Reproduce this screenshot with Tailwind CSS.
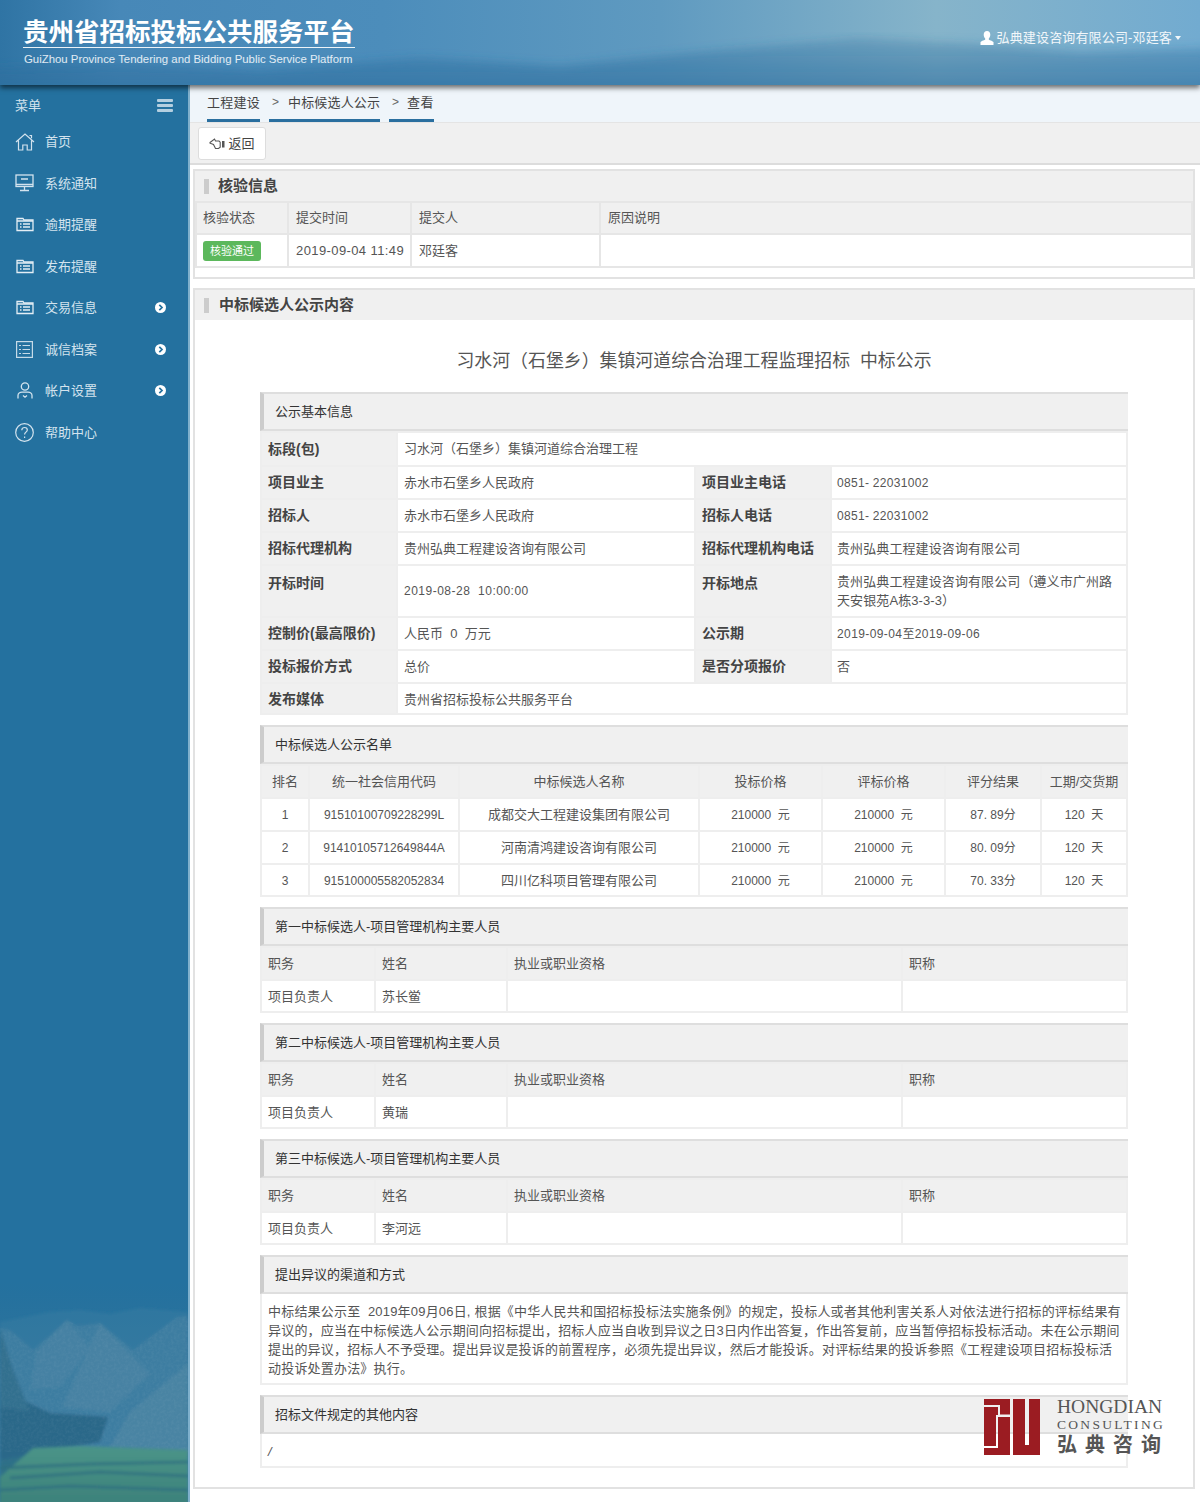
<!DOCTYPE html>
<html lang="zh">
<head>
  <meta charset="UTF-8">
  <title>贵州省招标投标公共服务平台</title>
  <script src="https://cdn.jsdelivr.net/npm/@tailwindcss/browser@4"></script>
</head>
<body class="w-[1200px] h-[1502px] overflow-hidden relative bg-white text-[13px] text-[#555] font-['Liberation_Sans','Noto_Sans_CJK_SC',sans-serif]">

  <!-- Header -->
  <header class="relative z-10 h-[85px] flex justify-between overflow-hidden shadow-[0_3px_5px_rgba(0,0,0,0.55)] bg-[linear-gradient(90deg,#2f74a4_0%,#4788b8_10%,#4c8dbb_32%,#5f9ac0_55%,#86b4ca_78%,#72abd0_100%)]">
    <svg class="absolute inset-0" width="1200" height="85" viewBox="0 0 1200 85">
      <defs>
        <linearGradient id="hfade" x1="0" y1="0" x2="0" y2="1">
          <stop offset="0" stop-color="#2a6c9c" stop-opacity="0.25"/>
          <stop offset="1" stop-color="#2f6f9e" stop-opacity="0.7"/>
        </linearGradient>
        <filter id="hblur"><feGaussianBlur stdDeviation="5"/></filter>
      </defs>
      <g filter="url(#hblur)">
        <path d="M-10 68 L120 62 L260 70 L420 58 L560 66 L720 50 L860 38 L980 44 L1080 52 L1210 48 V95 H-10 Z" fill="url(#hfade)"/>
      </g>
    </svg>
    <div class="relative pl-[23px] pt-[17px] w-[356px]">
      <div class="text-[25.5px] leading-[30px] font-bold text-white whitespace-nowrap border-b border-white/90 w-[332px]">贵州省招标投标公共服务平台</div>
      <div class="mt-[3px] pl-px text-[11.4px] leading-[17px] text-white/85 whitespace-nowrap w-[332px]">GuiZhou Province Tendering and Bidding Public Service Platform</div>
    </div>
    <div class="relative flex items-center gap-[3px] pr-[19px] pb-[9px] text-white/90 whitespace-nowrap">
      <svg width="14" height="14" viewBox="0 0 14 14" fill="#fff"><path d="M7 0c2.100 0 3.300 1.500 3.300 3.700 0 1.500-.6 2.900-1.500 3.700v1c0 .5 3.700 1.100 4.700 2.700v2.900H.5v-2.900c1-1.600 4.700-2.200 4.700-2.700v-1C4.300 6.600 3.700 5.200 3.700 3.700 3.700 1.500 4.900 0 7 0z"/></svg>
      <span class="tracking-[0.15px]">弘典建设咨询有限公司-邓廷客</span>
      <span class="w-0 h-0 border-x-[3.500px] border-x-transparent border-t-[4px] border-t-white/90"></span>
    </div>
  </header>

  <div class="flex h-[1417px]">
    <!-- Sidebar -->
    <aside class="relative w-[190px] shrink-0 overflow-hidden border-r-2 border-[#7fb0cc] bg-[#24719f] text-[#d3e3ee]">
      <svg class="absolute left-0 bottom-0" width="188" height="220" viewBox="0 0 188 220">
        <defs>
          <linearGradient id="skyfade" x1="0" y1="0" x2="0" y2="1">
            <stop offset="0" stop-color="#2a7199" stop-opacity="0"/>
            <stop offset="0.4" stop-color="#34789f"/>
            <stop offset="1" stop-color="#3a7fa3"/>
          </linearGradient>
          <linearGradient id="field" x1="0" y1="0" x2="0" y2="1">
            <stop offset="0" stop-color="#4a9488"/>
            <stop offset="1" stop-color="#3c817a"/>
          </linearGradient>
          <filter id="soft"><feGaussianBlur stdDeviation="1.500"/></filter>
          <filter id="grain" x="0" y="0" width="100%" height="100%">
            <feTurbulence type="fractalNoise" baseFrequency="0.35" numOctaves="3" seed="4"/>
            <feColorMatrix values="0 0 0 0 1  0 0 0 0 1  0 0 0 0 1  0.9 0 0 0 -0.3"/>
          </filter>
          <clipPath id="rocks"><path d="M0 46 L10 48 L33 68 L67 38 L78 44 L100 41 L133 68 L177 35 L188 34 V170 H0 Z"/></clipPath>
        </defs>
        <rect y="0" width="188" height="220" fill="url(#skyfade)"/>
        <g filter="url(#soft)">
          <path d="M0 40 L50 30 L80 28 L110 32 L140 26 L188 30 V120 H0 Z" fill="#367ca1" opacity=".5"/>
          <path d="M0 46 L10 48 L33 68 L67 38 L78 44 L100 41 L133 68 L177 35 L188 34 V170 H0 Z" fill="#3c7da1"/>
          <path d="M36 70 L67 38 L90 66 L60 105 L30 108 Z" fill="#4581a3"/>
          <path d="M100 41 L150 92 L110 130 L62 125 Z" fill="#4682a3"/>
          <path d="M110 165 L130 130 L188 82 V170 Z" fill="#4a84a3"/>
          <path d="M0 105 L16 115 L50 131 L108 135 L100 160 L35 172 L0 178 Z" fill="#2b6889"/>
          <path d="M0 46 L12 85 L30 130 L0 125 Z" fill="#31708f"/>
          <path d="M0 178 L35 172 L33 200 L0 220 Z" fill="#2f6f88"/>
        </g>
        <rect y="0" width="188" height="170" fill="#fff" filter="url(#grain)" clip-path="url(#rocks)" opacity=".1"/>
        <g filter="url(#soft)">
          <path d="M0 195 L33 166 L80 164 L188 168 V222 H0 Z" fill="url(#field)"/>
          <path d="M0 186 L90 182 L188 180 M10 196 L100 190 L188 194 M0 208 L70 204 L188 208" stroke="#2f6f80" stroke-width="2.500" fill="none"/>
        </g>
      </svg>
      <div class="relative">
        <div class="h-[36px] flex items-center justify-between pl-[15px] pr-[15px] pt-[5px]">
          <span>菜单</span>
          <svg width="16" height="13" viewBox="0 0 16 13" fill="#b4cfe0"><rect width="16" height="3" rx="1"/><rect y="5" width="16" height="3" rx="1"/><rect y="10" width="16" height="3" rx="1"/></svg>
        </div>
        <nav class="flex flex-col">
          <a class="h-[41.500px] flex items-center">
            <span class="w-[45px] pl-[15px]"><svg width="20" height="18" viewBox="0 0 20 18" fill="none" stroke="#d3e3ee" stroke-width="1.200"><path d="M1 9 10 1l9 8M3.500 7.500V17h4.300v-5h4.400v5h4.300V7.500M14.500 2.500h2v2.800"/></svg></span>
            <span>首页</span>
          </a>
          <a class="h-[41.500px] flex items-center">
            <span class="w-[45px] pl-[15px]"><svg width="19" height="18" viewBox="0 0 19 18" fill="none" stroke="#d3e3ee" stroke-width="1.300"><rect x="1" y="1" width="17" height="11.500"/><path d="M1 10.500h17M9.500 12.500v3.500M5 16.500h9M6 5h7"/></svg></span>
            <span>系统通知</span>
          </a>
          <a class="h-[41.500px] flex items-center">
            <span class="w-[45px] pl-[16px]"><svg width="18" height="15" viewBox="0 0 18 15" fill="none" stroke="#e4eef5" stroke-width="1.300"><path d="M1 13.500V1.500h6l1 1.500h9v10.500z"/><path d="M1 4h16M4 7h1.500M7 7h7M4 10h1.500M7 10h7"/></svg></span>
            <span>逾期提醒</span>
          </a>
          <a class="h-[41.500px] flex items-center">
            <span class="w-[45px] pl-[16px]"><svg width="18" height="15" viewBox="0 0 18 15" fill="none" stroke="#e4eef5" stroke-width="1.300"><path d="M1 13.500V1.500h6l1 1.500h9v10.500z"/><path d="M1 4h16M4 7h1.500M7 7h7M4 10h1.500M7 10h7"/></svg></span>
            <span>发布提醒</span>
          </a>
          <a class="h-[41.500px] flex items-center">
            <span class="w-[45px] pl-[16px]"><svg width="18" height="15" viewBox="0 0 18 15" fill="none" stroke="#e4eef5" stroke-width="1.300"><path d="M1 13.500V1.500h6l1 1.500h9v10.500z"/><path d="M1 4h16M4 7h1.500M7 7h7M4 10h1.500M7 10h7"/></svg></span>
            <span class="w-[110px]">交易信息</span>
            <svg width="11" height="11" viewBox="0 0 11 11"><circle cx="5.500" cy="5.500" r="5.500" fill="#fff"/><path d="M4.300 2.800 7 5.500 4.300 8.200" stroke="#24719f" stroke-width="1.700" fill="none"/></svg>
          </a>
          <a class="h-[41.500px] flex items-center">
            <span class="w-[45px] pl-[16px]"><svg width="17" height="17" viewBox="0 0 17 17" fill="none" stroke="#c6dbe8" stroke-width="1.200"><rect x=".6" y=".6" width="15.800" height="15.800"/><path d="M3 4.500h2M6.500 4.500h7.500M3 8.500h2M6.500 8.500h7.500M3 12.500h2M6.500 12.500h7.500"/></svg></span>
            <span class="w-[110px]">诚信档案</span>
            <svg width="11" height="11" viewBox="0 0 11 11"><circle cx="5.500" cy="5.500" r="5.500" fill="#fff"/><path d="M4.300 2.800 7 5.500 4.300 8.200" stroke="#24719f" stroke-width="1.700" fill="none"/></svg>
          </a>
          <a class="h-[41.500px] flex items-center">
            <span class="w-[45px] pl-[17px]"><svg width="16" height="17" viewBox="0 0 16 17" fill="none" stroke="#d3e3ee" stroke-width="1.300"><circle cx="8" cy="4.500" r="3.700"/><path d="M1 16.500v-3c0-2 2-3.300 4-3.300h6c2 0 4 1.300 4 3.300v3M6 13.500l2 1.700 2-1.700"/></svg></span>
            <span class="w-[110px]">帐户设置</span>
            <svg width="11" height="11" viewBox="0 0 11 11"><circle cx="5.500" cy="5.500" r="5.500" fill="#fff"/><path d="M4.300 2.800 7 5.500 4.300 8.200" stroke="#24719f" stroke-width="1.700" fill="none"/></svg>
          </a>
          <a class="h-[41.500px] flex items-center">
            <span class="w-[45px] pl-[15px]"><svg width="19" height="19" viewBox="0 0 19 19" fill="none" stroke="#d3e3ee" stroke-width="1.200"><circle cx="9.500" cy="9.500" r="8.800"/><path d="M6.800 7.200c0-1.700 1.200-2.700 2.800-2.700s2.700 1 2.700 2.400c0 2.200-2.700 2.200-2.700 4.500"/><path d="M9.600 13.500v1.400"/></svg></span>
            <span>帮助中心</span>
          </a>
        </nav>
      </div>
    </aside>

    <main class="flex-1 min-w-0">
      <!-- Breadcrumb -->
      <div class="h-[38px] bg-[#eff5fa] border-b border-[#e4e4e4] flex items-start gap-[9px] pl-[17px] text-[#444]">
        <span class="h-[37px] leading-[35px] border-b-[3px] border-[#2a6f9f] tracking-[0.25px]">工程建设</span>
        <span class="h-[37px] leading-[35px] border-b-[3px] border-[#2a6f9f] flex items-center gap-[9px] pl-[3px]"><span class="text-[#666] text-[12px]">&gt;</span><span class="tracking-[0.15px]">中标候选人公示</span></span>
        <span class="h-[37px] leading-[35px] border-b-[3px] border-[#2a6f9f] flex items-center gap-[8px] pl-[3px]"><span class="text-[#666] text-[12px]">&gt;</span><span class="tracking-[0.4px]">查看</span></span>
      </div>
      <!-- Toolbar -->
      <div class="h-[42px] bg-[#f0f0f0] border-b-2 border-[#dcdcdc] pl-[8px] pt-[4px]">
        <button class="h-[33px] w-[68px] bg-white border border-[#ddd] rounded-[3px] flex items-center justify-center gap-[2px] text-[#444]">
          <svg width="17" height="12" viewBox="0 0 17 12" fill="none" stroke="#555" stroke-width="1.100"><path d="M1 4.500 5.500 1l1 2h3.500l1.200 1.200v5L9.500 10.500H6.500L4.500 6.500 1 5.200z"/><rect x="13" y="3" width="2.500" height="6.500" fill="#555" stroke="none"/></svg>
          <span>返回</span>
        </button>
      </div>

      <div class="pl-[3px] pr-[5px] pt-[4px]">
        <!-- 核验信息 -->
        <section class="h-[110px] border-2 border-[#e2e2e2] mb-[9px]">
          <h3 class="h-[30px] bg-[#f0f0f0] flex items-center pl-[9px] gap-[9px] text-[15px] font-bold text-[#444]"><span class="w-[5px] h-[15px] bg-[#ccc]"></span>核验信息</h3>
          <table class="w-full table-fixed border-collapse">
            <colgroup><col class="w-[92px]"><col class="w-[123px]"><col class="w-[189px]"><col></colgroup>
            <tr class="h-[32px] bg-[#f0f0f0]">
              <td class="border-2 border-[#e6e6e6] pl-[6px]">核验状态</td>
              <td class="border-2 border-[#e6e6e6] pl-[7px]">提交时间</td>
              <td class="border-2 border-[#e6e6e6] pl-[7px]">提交人</td>
              <td class="border-2 border-[#e6e6e6] pl-[7px]">原因说明</td>
            </tr>
            <tr class="h-[33px]">
              <td class="border-2 border-[#e6e6e6] pl-[6px]"><span class="inline-block h-[20px] w-[58px] leading-[20px] text-center rounded-[3px] bg-[#5cb85c] text-white text-[11px]">核验通过</span></td>
              <td class="border-2 border-[#e6e6e6] pl-[7px] whitespace-nowrap tracking-[0.4px]">2019-09-04 11:49</td>
              <td class="border-2 border-[#e6e6e6] pl-[7px]">邓廷客</td>
              <td class="border-2 border-[#e6e6e6]"></td>
            </tr>
          </table>
        </section>

        <!-- 中标候选人公示内容 -->
        <section class="h-[1201px] border-2 border-[#e2e2e2] overflow-hidden">
          <h3 class="h-[30px] bg-[#f0f0f0] flex items-center pl-[9px] gap-[10px] text-[15px] font-bold text-[#444]"><span class="w-[5px] h-[15px] bg-[#ccc]"></span>中标候选人公示内容</h3>
          <div class="px-[65px]">
            <h2 class="h-[72px] pt-[28px] leading-[27px] text-center text-[17.9px] text-[#555]">习水河（石堡乡）集镇河道综合治理工程监理招标 &nbsp;中标公示</h2>

            <!-- 公示基本信息 -->
            <div class="h-[39px] leading-[36px] pl-[11px] bg-[#f0f0f0] border-y-2 border-l-4 border-y-[#dedede] border-l-[#ccc] text-[#333]">公示基本信息</div>
            <table class="w-full table-fixed border-collapse">
              <colgroup><col class="w-[136px]"><col class="w-[298px]"><col class="w-[136px]"><col></colgroup>
              <tr class="h-[34px]">
                <th class="border-2 border-[#eee] bg-[#f0f0f0] text-left text-[14px] font-bold pl-[6px] text-[#444]">标段(包)</th>
                <td colspan="3" class="border-2 border-[#eee] pl-[6px]">习水河（石堡乡）集镇河道综合治理工程</td>
              </tr>
              <tr class="h-[33px]">
                <th class="border-2 border-[#eee] bg-[#f0f0f0] text-left text-[14px] font-bold pl-[6px] text-[#444]">项目业主</th>
                <td class="border-2 border-[#eee] pl-[6px]">赤水市石堡乡人民政府</td>
                <th class="border-2 border-[#eee] bg-[#f0f0f0] text-left text-[14px] font-bold pl-[6px] text-[#444]">项目业主电话</th>
                <td class="border-2 border-[#eee] pl-[5px] text-[12px] tracking-[0.3px]">0851- 22031002</td>
              </tr>
              <tr class="h-[33px]">
                <th class="border-2 border-[#eee] bg-[#f0f0f0] text-left text-[14px] font-bold pl-[6px] text-[#444]">招标人</th>
                <td class="border-2 border-[#eee] pl-[6px]">赤水市石堡乡人民政府</td>
                <th class="border-2 border-[#eee] bg-[#f0f0f0] text-left text-[14px] font-bold pl-[6px] text-[#444]">招标人电话</th>
                <td class="border-2 border-[#eee] pl-[5px] text-[12px] tracking-[0.3px]">0851- 22031002</td>
              </tr>
              <tr class="h-[33px]">
                <th class="border-2 border-[#eee] bg-[#f0f0f0] text-left text-[14px] font-bold pl-[6px] text-[#444]">招标代理机构</th>
                <td class="border-2 border-[#eee] pl-[6px]">贵州弘典工程建设咨询有限公司</td>
                <th class="border-2 border-[#eee] bg-[#f0f0f0] text-left text-[14px] font-bold pl-[6px] text-[#444] whitespace-nowrap">招标代理机构电话</th>
                <td class="border-2 border-[#eee] pl-[5px] tracking-[0.1px]">贵州弘典工程建设咨询有限公司</td>
              </tr>
              <tr class="h-[52px]">
                <th class="border-2 border-[#eee] bg-[#f0f0f0] text-left text-[14px] align-top pt-[7px] font-bold pl-[6px] text-[#444]">开标时间</th>
                <td class="border-2 border-[#eee] pl-[6px] text-[12px] tracking-[0.5px]">2019-08-28 &nbsp;10:00:00</td>
                <th class="border-2 border-[#eee] bg-[#f0f0f0] text-left text-[14px] align-top pt-[7px] font-bold pl-[6px] text-[#444]">开标地点</th>
                <td class="border-2 border-[#eee] pl-[5px] leading-[19px] whitespace-nowrap tracking-[0.1px]">贵州弘典工程建设咨询有限公司（遵义市广州路<br>天安银苑A栋3-3-3）</td>
              </tr>
              <tr class="h-[33px]">
                <th class="border-2 border-[#eee] bg-[#f0f0f0] text-left text-[14px] font-bold pl-[6px] text-[#444] whitespace-nowrap">控制价(最高限价)</th>
                <td class="border-2 border-[#eee] pl-[6px]">人民币&nbsp; 0&nbsp; 万元</td>
                <th class="border-2 border-[#eee] bg-[#f0f0f0] text-left text-[14px] font-bold pl-[6px] text-[#444]">公示期</th>
                <td class="border-2 border-[#eee] pl-[5px] text-[12px] tracking-[0.4px]">2019-09-04至2019-09-06</td>
              </tr>
              <tr class="h-[33px]">
                <th class="border-2 border-[#eee] bg-[#f0f0f0] text-left text-[14px] font-bold pl-[6px] text-[#444]">投标报价方式</th>
                <td class="border-2 border-[#eee] pl-[6px]">总价</td>
                <th class="border-2 border-[#eee] bg-[#f0f0f0] text-left text-[14px] font-bold pl-[6px] text-[#444]">是否分项报价</th>
                <td class="border-2 border-[#eee] pl-[5px]">否</td>
              </tr>
              <tr class="h-[31px]">
                <th class="border-2 border-[#eee] bg-[#f0f0f0] text-left text-[14px] font-bold pl-[6px] pt-[2px] text-[#444]">发布媒体</th>
                <td colspan="3" class="border-2 border-[#eee] pl-[6px] pt-[2px]">贵州省招标投标公共服务平台</td>
              </tr>
            </table>

            <!-- 中标候选人公示名单 -->
            <div class="mt-[10px] h-[39px] leading-[36px] pl-[11px] bg-[#f0f0f0] border-y-2 border-l-4 border-y-[#dedede] border-l-[#ccc] text-[#333]">中标候选人公示名单</div>
            <table class="w-full table-fixed border-collapse text-center">
              <colgroup><col class="w-[48px]"><col class="w-[150px]"><col class="w-[240px]"><col class="w-[123px]"><col class="w-[123px]"><col class="w-[96px]"><col></colgroup>
              <tr class="h-[33px] bg-[#f0f0f0]">
                <td class="border-2 border-[#eee]">排名</td><td class="border-2 border-[#eee]">统一社会信用代码</td><td class="border-2 border-[#eee]">中标候选人名称</td><td class="border-2 border-[#eee]">投标价格</td><td class="border-2 border-[#eee]">评标价格</td><td class="border-2 border-[#eee]">评分结果</td><td class="border-2 border-[#eee] whitespace-nowrap">工期/交货期</td>
              </tr>
              <tr class="h-[33px]">
                <td class="border-2 border-[#eee] text-[12px]">1</td><td class="border-2 border-[#eee] text-[12px]">91510100709228299L</td><td class="border-2 border-[#eee]">成都交大工程建设集团有限公司</td><td class="border-2 border-[#eee] text-[12px]">210000 &nbsp;元</td><td class="border-2 border-[#eee] text-[12px]">210000 &nbsp;元</td><td class="border-2 border-[#eee] text-[12px]">87. 89分</td><td class="border-2 border-[#eee] text-[12px]">120 &nbsp;天</td>
              </tr>
              <tr class="h-[33px]">
                <td class="border-2 border-[#eee] text-[12px]">2</td><td class="border-2 border-[#eee] text-[12px]">91410105712649844A</td><td class="border-2 border-[#eee]">河南清鸿建设咨询有限公司</td><td class="border-2 border-[#eee] text-[12px]">210000 &nbsp;元</td><td class="border-2 border-[#eee] text-[12px]">210000 &nbsp;元</td><td class="border-2 border-[#eee] text-[12px]">80. 09分</td><td class="border-2 border-[#eee] text-[12px]">120 &nbsp;天</td>
              </tr>
              <tr class="h-[32px] [&>td]:pt-[1px]">
                <td class="border-2 border-[#eee] text-[12px]">3</td><td class="border-2 border-[#eee] text-[12px]">915100005582052834</td><td class="border-2 border-[#eee]">四川亿科项目管理有限公司</td><td class="border-2 border-[#eee] text-[12px]">210000 &nbsp;元</td><td class="border-2 border-[#eee] text-[12px]">210000 &nbsp;元</td><td class="border-2 border-[#eee] text-[12px]">70. 33分</td><td class="border-2 border-[#eee] text-[12px]">120 &nbsp;天</td>
              </tr>
            </table>

            <!-- 第一中标候选人 -->
            <div class="mt-[10px] h-[39px] leading-[36px] pl-[11px] bg-[#f0f0f0] border-y-2 border-l-4 border-y-[#dedede] border-l-[#ccc] text-[#333]">第一中标候选人-项目管理机构主要人员</div>
            <table class="w-full table-fixed border-collapse">
              <colgroup><col class="w-[114px]"><col class="w-[132px]"><col class="w-[395px]"><col></colgroup>
              <tr class="h-[33px] bg-[#f0f0f0]"><td class="border-2 border-[#eee] pl-[6px]">职务</td><td class="border-2 border-[#eee] pl-[6px]">姓名</td><td class="border-2 border-[#eee] pl-[6px]">执业或职业资格</td><td class="border-2 border-[#eee] pl-[6px]">职称</td></tr>
              <tr class="h-[32px] [&>td]:pt-[2px]"><td class="border-2 border-[#eee] pl-[6px]">项目负责人</td><td class="border-2 border-[#eee] pl-[6px]">苏长鲎</td><td class="border-2 border-[#eee]"></td><td class="border-2 border-[#eee]"></td></tr>
            </table>

            <!-- 第二中标候选人 -->
            <div class="mt-[10px] h-[39px] leading-[36px] pl-[11px] bg-[#f0f0f0] border-y-2 border-l-4 border-y-[#dedede] border-l-[#ccc] text-[#333]">第二中标候选人-项目管理机构主要人员</div>
            <table class="w-full table-fixed border-collapse">
              <colgroup><col class="w-[114px]"><col class="w-[132px]"><col class="w-[395px]"><col></colgroup>
              <tr class="h-[33px] bg-[#f0f0f0]"><td class="border-2 border-[#eee] pl-[6px]">职务</td><td class="border-2 border-[#eee] pl-[6px]">姓名</td><td class="border-2 border-[#eee] pl-[6px]">执业或职业资格</td><td class="border-2 border-[#eee] pl-[6px]">职称</td></tr>
              <tr class="h-[32px] [&>td]:pt-[2px]"><td class="border-2 border-[#eee] pl-[6px]">项目负责人</td><td class="border-2 border-[#eee] pl-[6px]">黄瑞</td><td class="border-2 border-[#eee]"></td><td class="border-2 border-[#eee]"></td></tr>
            </table>

            <!-- 第三中标候选人 -->
            <div class="mt-[10px] h-[39px] leading-[36px] pl-[11px] bg-[#f0f0f0] border-y-2 border-l-4 border-y-[#dedede] border-l-[#ccc] text-[#333]">第三中标候选人-项目管理机构主要人员</div>
            <table class="w-full table-fixed border-collapse">
              <colgroup><col class="w-[114px]"><col class="w-[132px]"><col class="w-[395px]"><col></colgroup>
              <tr class="h-[33px] bg-[#f0f0f0]"><td class="border-2 border-[#eee] pl-[6px]">职务</td><td class="border-2 border-[#eee] pl-[6px]">姓名</td><td class="border-2 border-[#eee] pl-[6px]">执业或职业资格</td><td class="border-2 border-[#eee] pl-[6px]">职称</td></tr>
              <tr class="h-[32px] [&>td]:pt-[2px]"><td class="border-2 border-[#eee] pl-[6px]">项目负责人</td><td class="border-2 border-[#eee] pl-[6px]">李河远</td><td class="border-2 border-[#eee]"></td><td class="border-2 border-[#eee]"></td></tr>
            </table>

            <!-- 异议 -->
            <div class="mt-[10px] h-[39px] leading-[36px] pl-[11px] bg-[#f0f0f0] border-y-2 border-l-4 border-y-[#dedede] border-l-[#ccc] text-[#333]">提出异议的渠道和方式</div>
            <div class="h-[91px] border-2 border-t-0 border-[#eee] pl-[6px] pt-[8px] leading-[19px] whitespace-nowrap tracking-[0.19px]">中标结果公示至 &nbsp;2019年09月06日, 根据《中华人民共和国招标投标法实施条例》的规定，投标人或者其他利害关系人对依法进行招标的评标结果有<br>异议的，应当在中标候选人公示期间向招标提出，招标人应当自收到异议之日3日内作出答复，作出答复前，应当暂停招标投标活动。未在公示期间<br>提出的异议，招标人不予受理。提出异议是投诉的前置程序，必须先提出异议，然后才能投诉。对评标结果的投诉参照《工程建设项目招标投标活<br>动投诉处置办法》执行。</div>

            <!-- 其他内容 -->
            <div class="mt-[10px] h-[39px] leading-[36px] pl-[11px] bg-[#f0f0f0] border-y-2 border-l-4 border-y-[#dedede] border-l-[#ccc] text-[#333]">招标文件规定的其他内容</div>
            <div class="h-[34px] border-2 border-t-0 border-[#eee] pl-[6px] leading-[35px] italic">/</div>
          </div>
        </section>
      </div>
    </main>
  </div>

  <!-- Watermark logo -->
  <div class="absolute left-[984px] top-[1399px] flex gap-[17px]">
    <svg width="56" height="56" viewBox="0 0 56 56" fill="#9b1c22">
      <path d="M0 0H26V15.500H16V6H0z"/>
      <path d="M0 8H14V16H12V47H0z"/>
      <path d="M14 18H26V56H0V49H14z"/>
      <path d="M29 0H41V46H45V0H56V56H29z"/>
    </svg>
    <div class="-mt-[2px] flex flex-col text-[#555] leading-none font-['Liberation_Serif','Noto_Sans_CJK_SC',serif]">
      <span class="text-[19.500px] h-[20px] whitespace-nowrap">HONGDIAN</span>
      <span class="text-[13.500px] h-[15px] mt-[1px] tracking-[2.300px] whitespace-nowrap">CONSULTING</span>
      <span class="text-[20px] mt-[1px] font-bold tracking-[8px] whitespace-nowrap font-['Noto_Sans_CJK_SC',sans-serif]">弘典咨询</span>
    </div>
  </div>
</body>
</html>
